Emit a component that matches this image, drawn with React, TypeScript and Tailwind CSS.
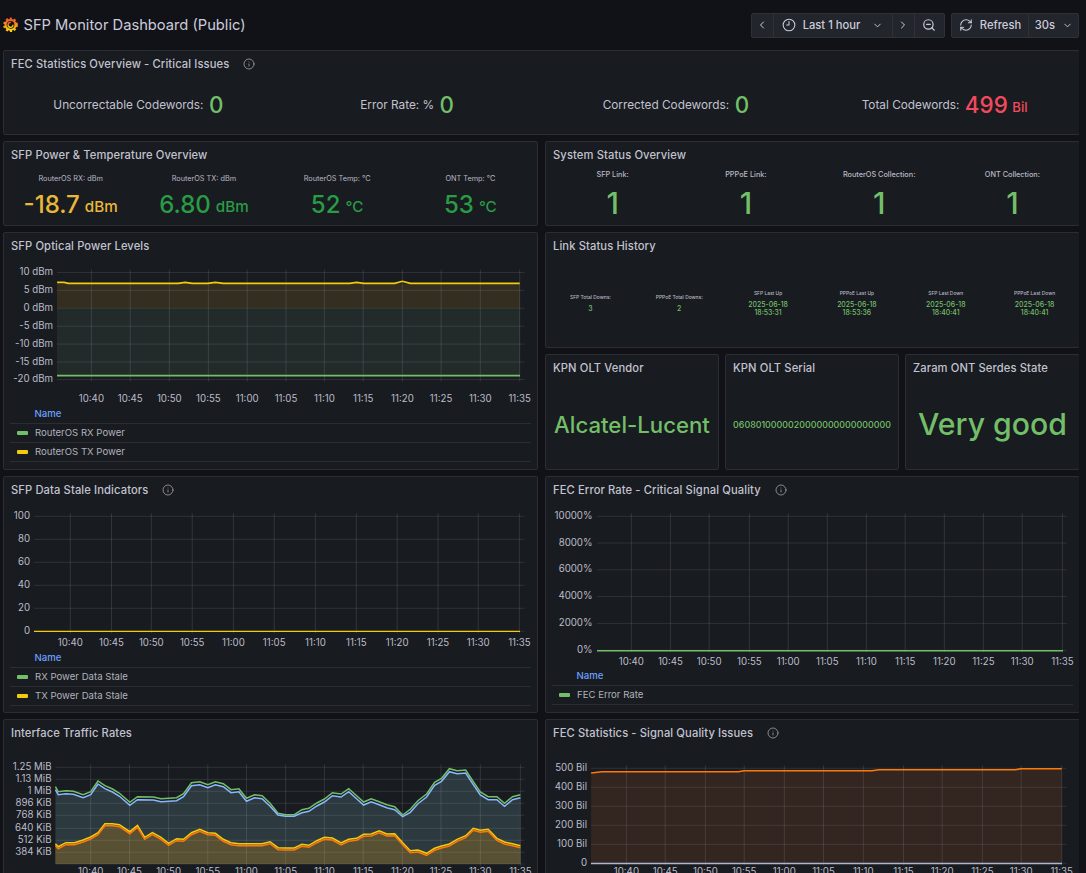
import React from 'react';
import { ChevronLeft, ChevronRight, ChevronDown, Info, RefreshCw, ZoomOut } from 'lucide-react';

const GRID = '#ccccdc';
const TIMES = ['10:40', '10:45', '10:50', '10:55', '11:00', '11:05', '11:10', '11:15', '11:20', '11:25', '11:30', '11:35'];

// zoom crop coords -> page coords
const zx = (x: number, off = 0) => +(off + x / 2.888).toFixed(1);
const zy = (y: number, off: number) => +(off + y / 3).toFixed(1);

const toPts = (list: number[][], xOff: number, yOff: number) =>
  list.map(([x, y]) => `${zx(x, xOff)},${zy(y, yOff)}`).join(' ');

const greenRaw = [[160,200],[168,215],[190,212],[212,214],[240,224],[262,215],[283,183],[303,197],[325,207],[345,220],[375,247],[397,230],[443,231],[465,236],[510,233],[530,221],[553,188],[577,185],[600,194],[622,185],[645,191],[667,209],[690,206],[712,235],[735,224],[757,227],[780,250],[803,280],[825,284],[850,284],[872,269],[892,265],[915,249],[937,237],[960,218],[985,222],[1007,206],[1030,227],[1050,246],[1072,236],[1095,245],[1117,254],[1140,260],[1163,285],[1185,268],[1207,242],[1232,222],[1255,187],[1275,175],[1298,146],[1320,152],[1345,150],[1367,185],[1387,216],[1410,230],[1435,230],[1457,250],[1480,230],[1503,224]];
const blueRaw = greenRaw.map(([x, y]) => [x, y + (y > 275 ? 5 : 9)]);
const yellowRaw = [[160,371],[168,380],[190,368],[215,368],[240,360],[262,351],[283,338],[303,311],[325,311],[345,314],[375,335],[397,316],[418,352],[440,338],[465,352],[487,370],[510,356],[530,358],[553,338],[577,328],[600,338],[622,340],[645,358],[667,368],[690,371],[712,371],[735,371],[757,371],[780,365],[803,383],[825,384],[850,384],[872,373],[892,376],[915,362],[937,352],[960,354],[985,369],[1007,358],[1030,355],[1050,343],[1072,342],[1095,332],[1117,342],[1140,341],[1163,368],[1185,392],[1207,390],[1232,400],[1255,385],[1275,378],[1298,372],[1320,358],[1345,347],[1367,325],[1387,331],[1410,328],[1435,355],[1457,366],[1480,371],[1503,377]];
const orangeRaw = yellowRaw.map(([x, y]) => [x, y + 6]);

const txRaw = [[165,157],[185,157],[197,160],[515,160],[535,157],[555,160],[600,160],[622,157],[645,160],[1010,160],[1030,157],[1050,160],[1140,160],[1162,154],[1185,160],[1501,160]];
const fecRaw = [[139,159],[170,155],[565,155],[580,152],[950,152],[970,149],[1365,149],[1380,146],[1498,146]];

type Axis = {
  box: [number, number, number, number];
  x0: number;
  x1: number;
  labelX: number;
  ys: { y: number; label: string }[];
  xs: number[];
  timeY: number;
  children?: React.ReactNode;
  under?: React.ReactNode;
};

const Chart = ({ box, x0, x1, labelX, ys, xs, timeY, children, under }: Axis) => (
  <svg width={box[2]} height={box[3]} viewBox={box.join(' ')} className="block shrink-0">
    {under}
    {ys.map((g) => (
      <line key={g.y} x1={x0} x2={x1} y1={g.y} y2={g.y} stroke={GRID} strokeOpacity={0.12} />
    ))}
    {xs.map((x) => (
      <line key={x} x1={x} x2={x} y1={ys[0].y - 3} y2={ys[ys.length - 1].y + 2} stroke={GRID} strokeOpacity={0.14} />
    ))}
    {children}
    {ys.map((g) => (
      <text key={g.y} x={labelX} y={g.y + 2.5} textAnchor="end" className="text-[9.7px] fill-[#bcbccb]">
        {g.label}
      </text>
    ))}
    {xs.map((x, i) => (
      <text key={x} x={x} y={timeY} textAnchor="middle" className="text-[9.7px] fill-[#bcbccb]">
        {TIMES[i]}
      </text>
    ))}
  </svg>
);

const Panel = ({ title, info, className, children }: { title: string; info?: number; className?: string; children?: React.ReactNode }) => (
  <div className={`flex flex-col overflow-hidden rounded-[2px] border border-[#2b2d32] bg-[#181b1f] ${className ?? ''}`}>
    <div className="flex h-[26px] shrink-0 items-center pl-[7px] pt-[1px] text-[11.2px] font-medium tracking-[0.11px] text-[#c2c2d0]">
      <span>{title}</span>
      {info ? <Info size={12} strokeWidth={1.6} className="-mt-[1px] text-[#a4a4af]" style={{ marginLeft: info }} /> : null}
    </div>
    {children}
  </div>
);

const Legend = ({ items, left }: { items: { name: string; color: string }[]; left: string }) => (
  <div className={left}>
    <div className="flex h-[19px] items-center pl-[24.5px] pt-[1px] text-[9.6px] font-medium text-[#6e9fff]">Name</div>
    {items.map((it) => (
      <div key={it.name} className="flex h-[19px] items-center border-t border-[#2b2d32] pl-[7px] text-[9.6px] text-[#b0b1bc] last:h-[20px] last:border-b">
        <span className="mr-[7px] h-[4px] w-[11px] rounded-[1px]" style={{ backgroundColor: it.color }} />
        {it.name}
      </div>
    ))}
  </div>
);

const HeadStat = ({ label, value, unit, color }: { label: string; value: string; unit?: string; color: string }) => (
  <div className="flex items-center justify-center">
    <span className="mr-[5.5px] text-[11.8px] text-[#c2c2d0]">{label}</span>
    <span className={`text-[22.4px] font-[450] leading-none ${color}`}>{value}</span>
    {unit ? <span className={`ml-[4.5px] mt-[4px] text-[13.2px] font-[450] leading-none ${color}`}>{unit}</span> : null}
  </div>
);

const PowerStat = ({ label, value, unit, color }: { label: string; value: string; unit: string; color: string }) => (
  <div className="flex flex-col items-center">
    <div className="h-[10px] text-[7.3px] leading-[10px] text-[#b8b8c6]">{label}</div>
    <div className={`mt-[6px] flex h-[30px] items-center font-[450] ${color}`}>
      <span className="text-[24px] leading-none">{value}</span>
      <span className="ml-[5px] mt-[4px] text-[15.2px] leading-none">{unit}</span>
    </div>
  </div>
);

const LinkStat = ({ label, lines }: { label: string; lines: string[] }) => (
  <div className="flex flex-col items-center">
    <div className="text-[4.9px] leading-[8px] font-medium text-[#b8b8c6]">{label}</div>
    <div className="mt-[4px] text-center text-[6.9px] font-medium leading-[8px] text-[#73bf69]">
      {lines.map((l) => (
        <div key={l}>{l}</div>
      ))}
    </div>
  </div>
);

const ClockIcon = () => (
  <svg width="14" height="14" viewBox="0 0 24 24" fill="none" stroke="currentColor" strokeWidth="1.8" strokeLinecap="round" strokeLinejoin="round">
    <circle cx="12" cy="12" r="10" />
    <path d="M12 6v6H8" />
  </svg>
);

const Logo = () => (
  <svg width="15" height="15" viewBox="0 0 24 24" className="shrink-0">
    <defs>
      <linearGradient id="gf" x1="0.5" y1="1" x2="0.5" y2="0">
        <stop offset="0" stopColor="#fcd20f" />
        <stop offset="1" stopColor="#f05a28" />
      </linearGradient>
    </defs>
    <circle cx="12" cy="12.5" r="8" fill="none" stroke="url(#gf)" strokeWidth="3.4" />
    <circle cx="12" cy="12.5" r="10" fill="none" stroke="url(#gf)" strokeWidth="3.5" strokeDasharray="3.4 3" />
    <path d="M16 13a4 4 0 1 1-4-4.5" fill="none" stroke="url(#gf)" strokeWidth="2.2" strokeLinecap="round" />
  </svg>
);

const seg = 'flex h-full items-center justify-center border-r border-[#2f3136] last:border-r-0';

export default function App() {
  return (
    <div className="h-[873px] w-[1086px] overflow-hidden bg-[#111217] text-[#ccccdc] [font-family:Inter,sans-serif]">
      {/* Top bar */}
      <div className="flex h-[50px] items-center justify-between pl-[3px] pr-[7px]">
        <div className="flex items-center gap-[5.5px]">
          <Logo />
          <h1 className="text-[14.7px] font-normal text-[#ccccdc]">SFP Monitor Dashboard (Public)</h1>
        </div>
        <div className="flex items-center gap-[6.5px] text-[11.2px] font-medium">
          <div className="flex h-[25px] items-center rounded-[2px] border border-[#2f3136] bg-[#22252b]">
            <div className={`${seg} w-[22px]`}><ChevronLeft size={12} /></div>
            <div className={`${seg} w-[119px] gap-[7px]`}>
              <ClockIcon />
              <span>Last 1 hour</span>
              <ChevronDown size={11} className="ml-[5px]" />
            </div>
            <div className={`${seg} w-[22px]`}><ChevronRight size={12} /></div>
            <div className={`${seg} w-[29px]`}><ZoomOut size={14} /></div>
          </div>
          <div className="flex h-[25px] items-center rounded-[2px] border border-[#2f3136] bg-[#22252b]">
            <div className={`${seg} w-[77px] gap-[7px]`}>
              <RefreshCw size={14} strokeWidth={1.8} />
              <span>Refresh</span>
            </div>
            <div className={`${seg} w-[49px] gap-[7px] pl-[1px]`}>
              <span>30s</span>
              <ChevronDown size={11} />
            </div>
          </div>
        </div>
      </div>

      <div className="w-[1079px] overflow-hidden pl-[3px]">
        <div className="flex w-[1077px] flex-col gap-[6px]">
          {/* FEC overview */}
          <Panel title="FEC Statistics Overview - Critical Issues" info={14} className="h-[85px]">
            <div className="grid flex-1 grid-cols-4 items-center">
              <HeadStat label="Uncorrectable Codewords:" value="0" color="text-[#73bf69]" />
              <HeadStat label="Error Rate: %" value="0" color="text-[#73bf69]" />
              <HeadStat label="Corrected Codewords:" value="0" color="text-[#73bf69]" />
              <HeadStat label="Total Codewords:" value="499" unit="Bil" color="text-[#f2495c]" />
            </div>
          </Panel>

          <div className="grid grid-cols-2 gap-[7px]">
            <Panel title="SFP Power & Temperature Overview" className="h-[85px]">
              <div className="grid grid-cols-4 pt-[6px]">
                <PowerStat label="RouterOS RX: dBm" value="-18.7" unit="dBm" color="text-[#eab839]" />
                <PowerStat label="RouterOS TX: dBm" value="6.80" unit="dBm" color="text-[#299c46]" />
                <PowerStat label="RouterOS Temp: °C" value="52" unit="°C" color="text-[#299c46]" />
                <PowerStat label="ONT Temp: °C" value="53" unit="°C" color="text-[#299c46]" />
              </div>
            </Panel>
            <Panel title="System Status Overview" className="h-[85px]">
              <div className="grid grid-cols-4 pt-[2px]">
                {['SFP Link:', 'PPPoE Link:', 'RouterOS Collection:', 'ONT Collection:'].map((l) => (
                  <div key={l} className="flex flex-col items-center">
                    <div className="h-[10px] text-[7.3px] font-medium leading-[10px] text-[#b8b8c6]">{l}</div>
                    <div className="mt-[8px] text-[30px] font-[450] leading-[30px] text-[#73bf69]">1</div>
                  </div>
                ))}
              </div>
            </Panel>
          </div>

          <div className="grid grid-cols-2 gap-[7px]">
            <Panel title="SFP Optical Power Levels" className="h-[238px]">
              <Chart
                box={[4, 259, 533, 145]}
                x0={57}
                x1={524.6}
                labelX={53}
                timeY={402}
                xs={[91.4, 130.2, 169.3, 208.4, 247.2, 286, 324.4, 363.2, 402.4, 441.1, 480.3, 519.7]}
                ys={[
                  { y: 272.5, label: '10 dBm' },
                  { y: 290.4, label: '5 dBm' },
                  { y: 308.3, label: '0 dBm' },
                  { y: 326.2, label: '-5 dBm' },
                  { y: 344.1, label: '-10 dBm' },
                  { y: 362, label: '-15 dBm' },
                  { y: 379.5, label: '-20 dBm' },
                ]}
                under={
                  <>
                    <rect x={57} y={283.5} width={463} height={24.8} fill="#332e20" />
                    <rect x={57} y={308.3} width={463} height={67.4} fill="#232b2a" />
                  </>
                }
              >
                <line x1={57} x2={520} y1={375.7} y2={375.7} stroke="#73bf69" strokeWidth={1.7} />
                <polyline points={toPts(txRaw, 0, 230)} fill="none" stroke="#f2cc0c" strokeWidth={1.7} />
              </Chart>
              <Legend
                left="ml-[6px] mr-[6px]"
                items={[
                  { name: 'RouterOS RX Power', color: '#73bf69' },
                  { name: 'RouterOS TX Power', color: '#f2cc0c' },
                ]}
              />
            </Panel>

            <div className="flex h-[238px] flex-col gap-[6px]">
              <Panel title="Link Status History" className="h-[116px]">
                <div className="grid h-[88px] grid-cols-6 items-center">
                  <LinkStat label="SFP Total Downs:" lines={['3']} />
                  <LinkStat label="PPPoE Total Downs:" lines={['2']} />
                  <LinkStat label="SFP Last Up" lines={['2025-06-18', '18:53:31']} />
                  <LinkStat label="PPPoE Last Up" lines={['2025-06-18', '18:53:36']} />
                  <LinkStat label="SFP Last Down" lines={['2025-06-18', '18:40:41']} />
                  <LinkStat label="PPPoE Last Down" lines={['2025-06-18', '18:40:41']} />
                </div>
              </Panel>
              <div className="grid h-[116px] grid-cols-[174px_174px_175px] gap-[6px]">
                <Panel title="KPN OLT Vendor">
                  <div className="flex flex-1 items-center justify-center text-[22.2px] font-[450] text-[#73bf69]">Alcatel-Lucent</div>
                </Panel>
                <Panel title="KPN OLT Serial">
                  <div className="flex flex-1 items-center justify-center text-[8.9px] font-[450] text-[#73bf69]">0608010000020000000000000000</div>
                </Panel>
                <Panel title="Zaram ONT Serdes State">
                  <div className="flex flex-1 items-center justify-center text-[30.2px] font-[450] text-[#73bf69]">Very good</div>
                </Panel>
              </div>
            </div>
          </div>

          <div className="grid grid-cols-2 gap-[7px]">
            <Panel title="SFP Data Stale Indicators" info={14} className="h-[237px]">
              <Chart
                box={[4, 503, 533, 145]}
                x0={34}
                x1={524.6}
                labelX={30}
                timeY={645.5}
                xs={[70.3, 111.5, 151.3, 192.2, 233.4, 274.2, 315.4, 356.3, 397.2, 438, 478.2, 519.4]}
                ys={[
                  { y: 516.3, label: '100' },
                  { y: 539.3, label: '80' },
                  { y: 562.3, label: '60' },
                  { y: 585.3, label: '40' },
                  { y: 608.3, label: '20' },
                  { y: 631.3, label: '0' },
                ]}
              >
                <line x1={34} x2={520} y1={631.4} y2={631.4} stroke="#f2cc0c" strokeWidth={1.4} />
              </Chart>
              <Legend
                left="ml-[6px] mr-[6px]"
                items={[
                  { name: 'RX Power Data Stale', color: '#73bf69' },
                  { name: 'TX Power Data Stale', color: '#f2cc0c' },
                ]}
              />
            </Panel>
            <Panel title="FEC Error Rate - Critical Signal Quality" info={14} className="h-[237px]">
              <Chart
                box={[546, 503, 533, 163]}
                x0={597}
                x1={1067}
                labelX={592.5}
                timeY={664.5}
                xs={[631.3, 670.4, 709.2, 749.4, 788.2, 827.3, 866.4, 905.2, 944.3, 983.4, 1022.2, 1062.4]}
                ys={[
                  { y: 516.3, label: '10000%' },
                  { y: 543, label: '8000%' },
                  { y: 569.8, label: '6000%' },
                  { y: 596.6, label: '4000%' },
                  { y: 623.4, label: '2000%' },
                  { y: 650.3, label: '0%' },
                ]}
              >
                <line x1={597} x2={1063} y1={650.8} y2={650.8} stroke="#73bf69" strokeWidth={1.6} />
              </Chart>
              <Legend left="ml-[6px] mr-[6px]" items={[{ name: 'FEC Error Rate', color: '#73bf69' }]} />
            </Panel>
          </div>

          {/* Bottom row runs off the page */}
          <div className="grid grid-cols-2 gap-[7px]">
            <Panel title="Interface Traffic Rates" className="h-[300px]">
              <Chart
                box={[4, 746, 533, 140]}
                x0={55.4}
                x1={524.6}
                labelX={51.5}
                timeY={875}
                xs={[90.7, 129.5, 168.6, 207.8, 246.5, 285.7, 324.4, 363.2, 402.4, 441, 480.3, 520.4]}
                ys={[
                  { y: 767.3, label: '1.25 MiB' },
                  { y: 779.3, label: '1.13 MiB' },
                  { y: 791.3, label: '1 MiB' },
                  { y: 803.3, label: '896 KiB' },
                  { y: 815.3, label: '768 KiB' },
                  { y: 828.3, label: '640 KiB' },
                  { y: 840.3, label: '512 KiB' },
                  { y: 852.3, label: '384 KiB' },
                  { y: 864, label: '' },
                ]}
                under={
                  <>
                    <polygon points={`55.4,864 ${toPts(blueRaw, 0, 720)} 520.4,864`} fill="#2c3a40" />
                    <polygon points={`55.4,864 ${toPts(yellowRaw, 0, 720)} 520.4,864`} fill="#585032" />
                  </>
                }
              >
                <polyline points={toPts(greenRaw, 0, 720)} fill="none" stroke="#73bf69" strokeWidth={1.5} />
                <polyline points={toPts(blueRaw, 0, 720)} fill="none" stroke="#8ab8ff" strokeWidth={1.5} />
                <polyline points={toPts(yellowRaw, 0, 720)} fill="none" stroke="#f2cc0c" strokeWidth={1.5} />
                <polyline points={toPts(orangeRaw, 0, 720)} fill="none" stroke="#ff780a" strokeWidth={1.5} />
              </Chart>
            </Panel>
            <Panel title="FEC Statistics - Signal Quality Issues" info={14} className="h-[300px]">
              <Chart
                box={[546, 746, 533, 140]}
                x0={591}
                x1={1066.5}
                labelX={587}
                timeY={875}
                xs={[626.4, 665.2, 705.4, 744.2, 784.3, 823.5, 863.3, 903.5, 942.2, 982.4, 1021.2, 1061.7]}
                ys={[
                  { y: 768.3, label: '500 Bil' },
                  { y: 787.3, label: '400 Bil' },
                  { y: 806.3, label: '300 Bil' },
                  { y: 825.3, label: '200 Bil' },
                  { y: 844.3, label: '100 Bil' },
                  { y: 863.3, label: '0' },
                ]}
                under={<polygon points={`591,863.3 ${toPts(fecRaw, 543, 720)} 1061.7,863.3`} fill="#33251f" />}
              >
                <polyline points={toPts(fecRaw, 543, 720)} fill="none" stroke="#ff780a" strokeWidth={1.6} />
                <line x1={591} x2={1062} y1={863.5} y2={863.5} stroke="#a9b8cc" strokeWidth={1.4} />
              </Chart>
            </Panel>
          </div>
        </div>
      </div>
    </div>
  );
}
